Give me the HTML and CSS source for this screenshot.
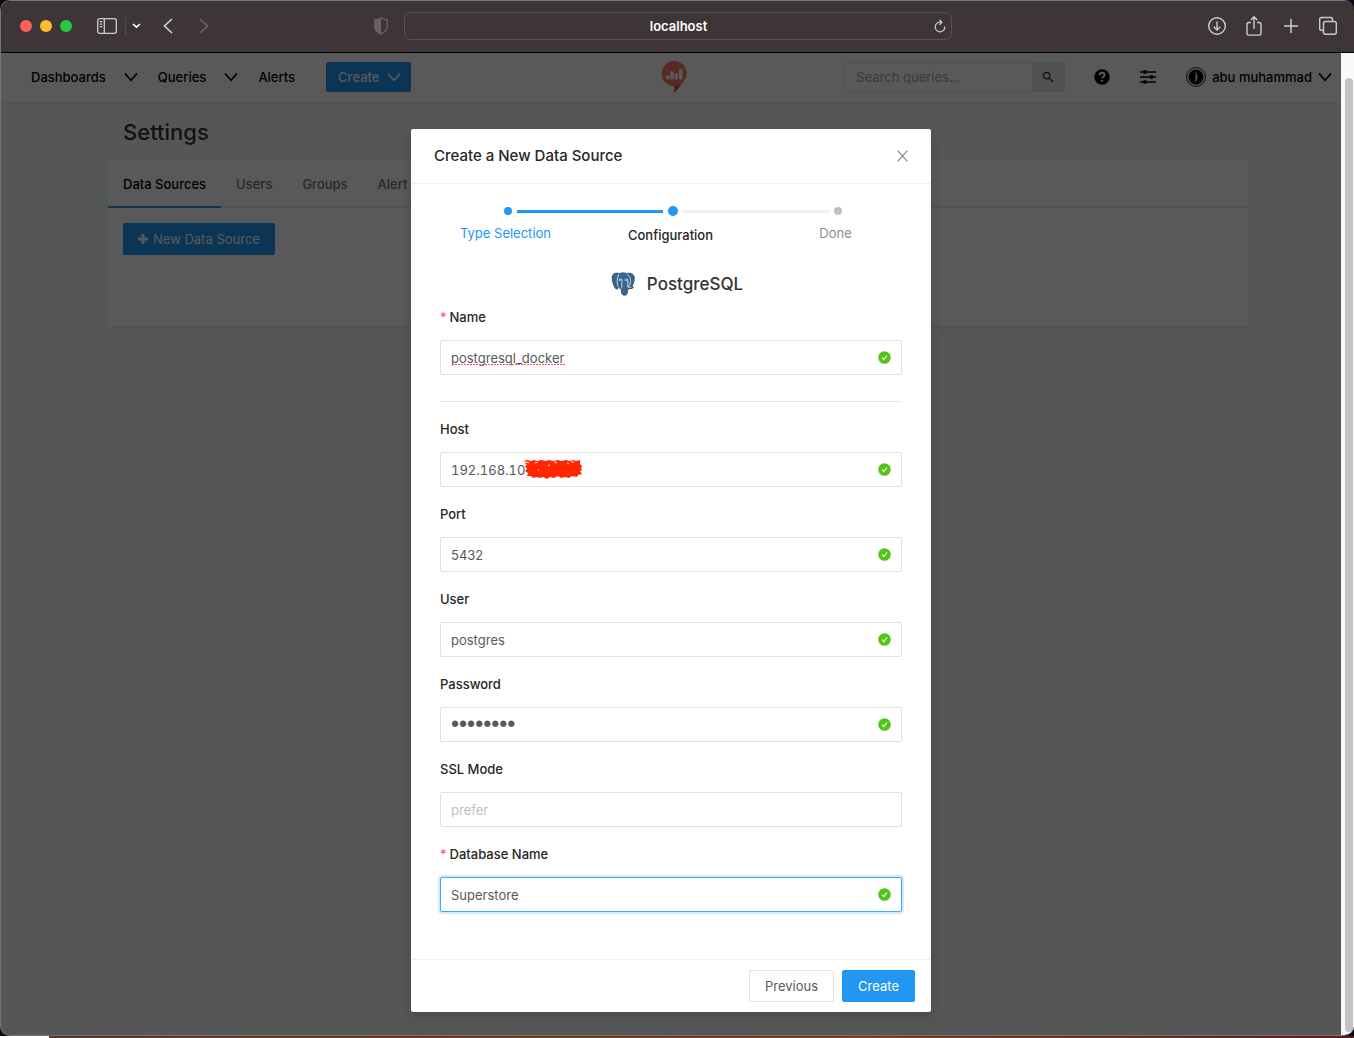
FILE: index.html
```html
<!DOCTYPE html>
<html lang="en">
<head>
<meta charset="utf-8">
<meta name="viewport" content="width=device-width, initial-scale=1">
<title>localhost</title>
<link rel="stylesheet" href="styles.css">
</head>
<body>
<svg class="defs" width="0" height="0" aria-hidden="true">
  <symbol id="chevron" viewBox="0 0 14 14"><path d="M1 3.500L7 10.200L13 3.500" fill="none" stroke="currentColor" stroke-width="1.700"/></symbol>
  <symbol id="valid" viewBox="0 0 14 14"><circle cx="7.500" cy="7.500" r="6.300" fill="#52c41a"/><path d="M5.100 7.600L6.900 9.500L9.900 5.500" fill="none" stroke="#fff" stroke-width="1.200"/></symbol>
</svg>
<div class="window">
  <header class="toolbar">
    <div class="toolbar-side">
      <div class="lights"><span class="light red"></span><span class="light yellow"></span><span class="light green"></span></div>
      <button class="tool sidebar-tool" aria-label="Show sidebar"><svg width="20" height="16" viewBox="0 0 20 16" fill="none" stroke="currentColor" stroke-width="1.300"><rect x=".7" y=".7" width="18.600" height="14.600" rx="2"/><path d="M7.300 1v14M2.700 3.700h2.600M2.700 6.200h2.600M2.700 8.700h2.600"/></svg></button>
      <span class="tool-divider"></span>
      <button class="tool" aria-label="Tab groups"><svg width="9" height="6" viewBox="0 0 9 6" fill="none" stroke="#fff" stroke-width="1.600"><path d="M1 1l3.500 3.200L8 1"/></svg></button>
      <button class="tool back-tool" aria-label="Back"><svg width="10" height="16" viewBox="0 0 10 16" fill="none" stroke="currentColor" stroke-width="1.700"><path d="M9 1L1.500 8L9 15"/></svg></button>
      <button class="tool forward-tool" aria-label="Forward"><svg width="10" height="16" viewBox="0 0 10 16" fill="none" stroke="currentColor" stroke-width="1.700"><path d="M1 1l7.500 7L1 15"/></svg></button>
      <button class="tool shield-tool" aria-label="Privacy report"><svg width="14" height="18" viewBox="0 0 14 18"><path d="M7 .7c2 1.500 4 2 6.200 2.200V9c0 4-2.700 6.400-6.200 8.200C3.500 15.400.8 13 .8 9V2.900C3 2.700 5 2.200 7 .7z" fill="none" stroke="currentColor" stroke-width="1.300"/><path d="M7 .7C5 2.200 3 2.700.8 2.900V9c0 4 2.700 6.400 6.200 8.200z" fill="currentColor"/></svg></button>
    </div>
    <div class="address">
      <span class="address-text">localhost</span>
      <button class="tool" aria-label="Reload"><svg width="12" height="14" viewBox="0 0 12 14" fill="none" stroke="currentColor" stroke-width="1.200"><path d="M10.800 7.500A4.800 4.800 0 1 1 6 3.200h1.500M5.300 .8l2.600 2.400-2.400 2.600"/></svg></button>
    </div>
    <div class="toolbar-side toolbar-end">
      <button class="tool" aria-label="Downloads"><svg width="20" height="20" viewBox="0 0 20 20" fill="none" stroke="currentColor" stroke-width="1.400"><circle cx="10" cy="10" r="8.300"/><path d="M10 5.500v8.300M6.700 10.800l3.300 3.200 3.300-3.200"/></svg></button>
      <button class="tool" aria-label="Share"><svg width="16" height="22" viewBox="0 0 16 22" fill="none" stroke="currentColor" stroke-width="1.400"><path d="M5 7.500H2.800C1.700 7.500 1 8.200 1 9.300v9c0 1.100.7 1.800 1.800 1.800h10.400c1.100 0 1.800-.7 1.800-1.800v-9c0-1.100-.7-1.800-1.800-1.800H11M8 14V2M4.800 5L8 1.700 11.200 5"/></svg></button>
      <button class="tool" aria-label="New tab"><svg width="14" height="14" viewBox="0 0 14 14" stroke="currentColor" stroke-width="1.500"><path d="M7 0v14M0 7h14"/></svg></button>
      <button class="tool" aria-label="Tab overview"><svg width="20" height="20" viewBox="0 0 20 20" fill="none" stroke="currentColor" stroke-width="1.400"><rect x="5.500" y="5.500" width="12.800" height="12.800" rx="2"/><path d="M5.300 14.300H3.500c-1 0-1.800-.7-1.800-1.800V3.300c0-1 .8-1.800 1.800-1.800h9.200c1.100 0 1.800.8 1.800 1.800v2"/></svg></button>
    </div>
  </header>

  <div class="viewport">
    <div class="page">
      <nav class="navbar">
        <div class="nav-start">
          <a class="nav-link" href="#">Dashboards</a><svg class="chevron" width="14" height="14"><use href="#chevron"/></svg>
          <a class="nav-link" href="#">Queries</a><svg class="chevron" width="14" height="14"><use href="#chevron"/></svg>
          <a class="nav-link" href="#">Alerts</a>
          <button class="btn primary nav-create">Create <svg width="14" height="14"><use href="#chevron"/></svg></button>
        </div>
        <a class="logo" href="#" aria-label="Redash"><svg width="26" height="34" viewBox="0 0 26 34"><path d="M13 1a12.500 12.500 0 0 1 12.700 12.600c0 4-2 7-4.200 9.200L13.400 33v-7A12.500 12.500 0 1 1 13 1z" fill="#ff7964"/><path d="M13.400 26c4 0 6.500-1.500 8.100-3.200L13.400 33z" fill="#d8503c"/><path d="M5 15.500h3.600v3.700H5zM9.300 11.500h3.400v7.700H9.300zM13.700 13.600h3.400v5.600h-3.400zM18 9h3.400v10.200H18z" fill="#fff"/></svg></a>
        <div class="nav-end">
          <form class="search">
            <input type="text" placeholder="Search queries..." aria-label="Search queries">
            <button type="button" aria-label="Search"><svg width="12" height="12" viewBox="0 0 12 12" fill="none" stroke="currentColor" stroke-width="1.300"><circle cx="4.600" cy="4.600" r="3.300"/><path d="M7 7l4 4"/></svg></button>
          </form>
          <a class="nav-icon" href="#" aria-label="Help"><svg width="16" height="16" viewBox="0 0 16 16"><circle cx="8" cy="8" r="7.700" fill="#000"/><path d="M5.500 6.200C5.700 4.500 6.800 3.800 8.100 3.800c1.400 0 2.500.8 2.500 2.200 0 1.800-2.200 1.800-2.300 3.400M8.200 10.700v2" fill="none" stroke="#fff" stroke-width="1.900"/></svg></a>
          <a class="nav-icon" href="#" aria-label="Settings"><svg width="16" height="16" viewBox="0 0 16 16"><path d="M0 3h16M0 8h16M0 13h16" stroke="#000" stroke-width="1.300"/><path d="M3.500 1.200h3v3.600h-3zM10 6.200h3v3.600h-3zM3.500 11.200h3v3.600h-3z" fill="#000"/></svg></a>
          <a class="account" href="#"><svg width="20" height="20" viewBox="0 0 20 20"><circle cx="10" cy="10" r="9.400" fill="#fff" stroke="#000" stroke-width=".9"/><circle cx="10" cy="10" r="7.500"/><path d="M9.300 4.200c3 3.500 2.800 8.500-.6 11.600 1.200-4 1.300-8 .6-11.600z" fill="#fff"/></svg>abu muhammad<svg class="account-chevron" width="14" height="14"><use href="#chevron"/></svg></a>
        </div>
      </nav>
      <main class="settings">
        <h1>Settings</h1>
        <section class="card">
          <div class="tabs"><a class="tab active" href="#">Data Sources</a><a class="tab" href="#">Users</a><a class="tab" href="#">Groups</a><a class="tab" href="#">Alert</a></div>
          <div class="card-body"><button class="btn primary new-source"><svg width="10" height="10" viewBox="0 0 10 10"><path d="M5 0v10M0 5h10" stroke="#fff" stroke-width="3"/></svg>New Data Source</button></div>
        </section>
      </main>
    </div>

    <div class="overlay">
      <div class="modal" role="dialog" aria-labelledby="modal-title">
        <div class="modal-header">
          <h2 id="modal-title">Create a New Data Source</h2>
          <button class="close" aria-label="Close"><svg width="11" height="12" viewBox="0 0 11 12" stroke="currentColor" stroke-width="1.300"><path d="M.6 .6l9.800 10.800M10.400 .6L.6 11.400"/></svg></button>
        </div>
        <div class="modal-body">
          <ol class="steps">
            <li class="step finished"><div class="track"><span class="rail empty"></span><span class="dot"></span><span class="rail done"></span></div><span class="step-name">Type Selection</span></li>
            <li class="step current"><div class="track"><span class="rail done"></span><span class="dot"></span><span class="rail"></span></div><span class="step-name">Configuration</span></li>
            <li class="step"><div class="track"><span class="rail"></span><span class="dot"></span><span class="rail empty"></span></div><span class="step-name">Done</span></li>
          </ol>
          <div class="source">
            <svg width="24" height="24" viewBox="0 0 24 24" stroke-linecap="round" stroke-linejoin="round"><path d="M8 1.600C4 .2 1 2 1.200 6c.1 3 1.600 8.500 3.400 10.500 1.200 1.300 2.200.2 3.200-.9.900.8 1.700.9 2.500.8-.1 2.300.1 4.500 1 5.800 1 1.400 3.600 1.400 4.600-.3.700-1.200.8-3.600.9-5.200 2.200.3 4.400-.1 5.500-1.200.4-.5-.2-.8-1.700-.7 1.600-2.600 3-6.500 2.600-9.600C22.700 1.500 19 .7 15.800 1.600 13.200.6 10.600.8 8 1.600z" fill="#336791" stroke="#444b52" stroke-width="1"/><path d="M8 2.200C6 4.400 6.300 9 6.300 11.500c0 1.600.5 3 1.600 3.700M8.300 7.500c1.500-.8 2.700-.5 2.900.7.100 1.500-.7 2.800-.5 4.300.1 1 .5 1.900-.2 3.500M15.800 2c3.300 2.400 3.900 5 3.700 7.300-.1 2.200-.9 3.900-2.500 5.700-.5-1.200-.4-2-.2-3 .2-1.500.3-2.600-.1-4.200M13.800 7.800c.9-.8 2.200-.9 3-.3M8.500 8.300h.8M15 8.500h.5M17 15c.8.500 1.800.5 3 .2" fill="none" stroke="#dfe8ef" stroke-width=".9"/></svg>
            <h3>PostgreSQL</h3>
          </div>
          <form class="fields" id="source-form">
            <div class="field"><label class="required" for="name">Name</label><div class="control"><input id="name" type="text" value="postgresql_docker" spellcheck="false"><span class="misspelled"></span><svg class="valid" width="14" height="14"><use href="#valid"/></svg></div></div>
            <hr>
            <div class="field"><label for="host">Host</label><div class="control"><input class="address-field" id="host" type="text" value="192.168.10"><svg class="scribble" width="60" height="20" viewBox="0 0 60 20"><path d="M1 2l4-1 4 1 3-1 3 1 4-1 5 1 2-1 6 1 4-1 3 1 5-1 4 1 3-1 3 1 4-1v4l2 2-1 3 2 1-3 1 2 3-4 1-1 2-5-1-3 2-4-1-4 1-3-2-4 2-4-1-3 2-4-2-3 1-3-1-4 1-2-2-4 0 1-3-3-2 2-2-2-3 2-1-2-2 3-1z" fill="#ff2600"/><path d="M13 4l3-1M32 3l3 1M26 7l2-1M45 4l2 1M16 11h1M49 3h3M5 3l2 1" stroke="#fff" stroke-width=".9"/></svg><svg class="valid" width="14" height="14"><use href="#valid"/></svg></div></div>
            <div class="field"><label for="port">Port</label><div class="control"><input id="port" type="text" value="5432"><svg class="valid" width="14" height="14"><use href="#valid"/></svg></div></div>
            <div class="field"><label for="user">User</label><div class="control"><input id="user" type="text" value="postgres"><svg class="valid" width="14" height="14"><use href="#valid"/></svg></div></div>
            <div class="field"><label for="password">Password</label><div class="control"><input id="password" type="password" value="postgres"><svg class="valid" width="14" height="14"><use href="#valid"/></svg></div></div>
            <div class="field"><label for="ssl">SSL Mode</label><div class="control"><input id="ssl" type="text" placeholder="prefer"></div></div>
            <div class="field"><label class="required" for="database">Database Name</label><div class="control"><input class="focused" id="database" type="text" value="Superstore"><svg class="valid" width="14" height="14"><use href="#valid"/></svg></div></div>
          </form>
        </div>
        <div class="modal-footer"><button class="btn" type="button">Previous</button><button class="btn primary" type="submit" form="source-form">Create</button></div>
      </div>
    </div>

    <div class="scrollbar"><span class="thumb"></span></div>
  </div>
</div>
<div class="desktop-edge"></div>
</body>
</html>
```
FILE: styles.css
```css
* { box-sizing: border-box; }

body {
  margin: 0;
  min-height: 100vh;
  display: flex;
  flex-direction: column;
  background: #0b0914;
  font: 13px/20px Inter, "Liberation Sans", sans-serif;
  color: #595959;
}

a { color: inherit; text-decoration: none; }
button, input { font: inherit; color: inherit; margin: 0; }
h1, h2, h3 { margin: 0; font-weight: 500; }
svg { display: block; flex: none; }
.defs { position: absolute; }

.window {
  flex: 1;
  display: flex;
  flex-direction: column;
  border: 1px solid #757373;
  border-right: 0;
  border-radius: 10px;
  overflow: hidden;
}

/* Browser toolbar */
.toolbar {
  height: 52px;
  display: grid;
  grid-template-columns: 1fr minmax(200px, 548px) 1fr;
  align-items: center;
  padding-bottom: 2px;
  background: #3e3536;
  border-bottom: 1px solid #000;
  color: #d0cbcb;
}
.toolbar-side { display: flex; align-items: center; padding-left: 19px; }
.toolbar-end { justify-content: flex-end; gap: 17px; padding: 0 16px 0 0; }
.toolbar-end .tool { width: 20px; display: flex; justify-content: center; }
.lights { display: flex; gap: 8px; margin-right: 25px; }
.light { width: 12px; height: 12px; border-radius: 50%; }
.red { background: #ff5f57; }
.yellow { background: #febc2e; }
.green { background: #28c840; }
.tool { padding: 0; border: 0; background: none; }
.tool-divider { width: 1px; height: 18px; margin: 0 6px 0 8px; background: #554c4d; }
.back-tool { margin-left: 22px; }
.forward-tool { margin-left: 26px; color: #6a6162; }
.shield-tool { margin: 0 16px 0 auto; color: #6a6162; }
.address {
  height: 28px;
  display: flex;
  align-items: center;
  padding: 0 5px 0 19px;
  border: 1px solid #5a5152;
  border-radius: 7px;
}
.address-text { flex: 1; text-align: center; font-weight: 600; color: #fff; }

/* Web page */
.viewport { flex: 1; display: grid; grid-template-columns: 1fr 13px; }
.page, .overlay { grid-row: 1; grid-column: 1; min-width: 0; }
.page { background: #f4f7f6; }

.navbar {
  height: 49px;
  display: grid;
  grid-template-columns: 1fr auto 1fr;
  align-items: center;
  padding: 0 9px 2px 15px;
  background: #fff;
  box-shadow: 0 4px 9px -3px rgba(102, 136, 153, 0.15);
  font-weight: 500;
  color: #000;
}
.nav-start, .nav-end { display: flex; align-items: center; }
.nav-end { justify-content: flex-end; }
.nav-link { padding-left: 15px; }
.chevron { margin: 0 5px 0 18px; }
.nav-create { margin-left: 31px; }
.nav-create.btn { height: 30px; gap: 8px; padding: 0 9px 0 11px; }
.search { display: flex; width: 222px; height: 30px; margin-right: 29px; font-weight: 400; }
.search input {
  flex: 1;
  min-width: 0;
  padding: 0 12px;
  border: 1px solid #e8e8e8;
  border-radius: 2px 0 0 2px;
  background: #fff;
}
.search input::placeholder { color: #a6a6a6; opacity: 1; }
.search button { width: 32px; padding: 0 0 0 9px; border: 0; background: #e4e8e8; color: #333; }
.nav-icon { margin-right: 30px; }
.account { display: flex; align-items: center; gap: 6px; }

.settings { width: 100%; max-width: 1154px; margin: 0 auto; padding: 15px 0 0 14px; }
.settings h1 { padding-left: 15px; font-size: 22px; line-height: 30px; color: #333; }
.card {
  min-height: 166px;
  margin-top: 13px;
  background: #fff;
  border-radius: 3px;
  box-shadow: 0 4px 9px -3px rgba(102, 136, 153, 0.15);
}
.tabs { height: 48px; display: flex; border-bottom: 2px solid #eaeaea; font-weight: 500; }
.tab { height: 48px; padding: 0 15px; line-height: 48px; color: #767676; }
.tab.active { border-bottom: 2px solid #2196f3; color: #000; }
.card-body { padding: 15px; }

.btn {
  height: 32px;
  display: inline-flex;
  align-items: center;
  justify-content: center;
  gap: 6px;
  padding: 0 15px;
  border: 1px solid #e3e3e3;
  border-radius: 2px;
  background: #fff;
}
.btn.primary { border-color: #2196f3; background: #2196f3; color: #fff; }
.new-source.btn { gap: 5px; padding: 0 14px; }

/* Dialog */
.overlay { padding: 76px 16px 23px; background: rgba(0, 0, 0, 0.65); }
.modal {
  max-width: 520px;
  margin: 0 auto;
  background: #fff;
  border-radius: 2px;
  box-shadow: 0 4px 12px rgba(0, 0, 0, 0.15);
}
.modal-header {
  height: 55px;
  display: flex;
  align-items: center;
  justify-content: space-between;
  padding: 0 23px;
  border-bottom: 1px solid #efefef;
}
.modal-header h2 { font-size: 15px; line-height: 22px; color: #262626; }
.close { padding: 0; border: 0; background: none; color: #8c8c8c; }
.modal-body { padding: 22px 29px 30px; }

.steps {
  display: grid;
  grid-template-columns: repeat(3, 165px);
  justify-content: center;
  margin: 0;
  padding: 0 0 0 4px;
  list-style: none;
}
.step { text-align: center; color: #8c8c8c; }
.track { height: 10px; display: flex; align-items: center; gap: 5px; }
.rail { flex: 1; height: 3px; background: #f0f0f0; }
.rail.done { background: #2196f3; }
.rail.empty { background: none; }
.dot { width: 8px; height: 8px; border-radius: 50%; background: #bfbfbf; }
.step-name { display: block; padding: 7px 5px 0 0; }
.finished { color: #2196f3; }
.finished .dot, .current .dot { background: #2196f3; }
.current { color: #262626; font-weight: 500; }
.current .dot { width: 10px; height: 10px; }
.current .step-name { padding-top: 9px; }

.source { display: flex; align-items: center; justify-content: center; gap: 12px; padding: 27px 0 11px 12px; }
.source h3 { font-size: 17px; line-height: 24px; color: #333; }

.field { padding-bottom: 17px; }
.field label { display: block; margin-bottom: 13px; font-weight: 500; color: #262626; }
.required::before { content: "*"; margin-right: 3px; font-weight: 400; color: #ff4d6a; }
.control { position: relative; }
.control input {
  display: block;
  width: 100%;
  height: 35px;
  padding: 0 36px 0 10px;
  border: 1px solid #e0e0e0;
  border-radius: 2px;
  background: #fff;
  outline: 0;
}
.control input::placeholder { color: #bfbfbf; opacity: 1; }
.control .focused { border-color: #40a9ff; box-shadow: 0 0 0 2px rgba(33, 150, 243, 0.2); }
.control .address-field { font-variant-numeric: tabular-nums; }
.control input[type="password"] { font-family: "Liberation Sans", sans-serif; font-size: 23px; }
.misspelled {
  position: absolute;
  top: 24px;
  left: 12px;
  width: 113px;
  height: 1px;
  background: repeating-linear-gradient(90deg, #ff4d6a 0 2px, transparent 2px 3px);
}
.valid { position: absolute; top: 10px; right: 11px; }
.scribble { position: absolute; top: 7px; left: 82px; }
hr { height: 1px; margin: 9px 0 17px; border: 0; background: #e8e8e8; }

.modal-footer {
  display: flex;
  justify-content: flex-end;
  gap: 8px;
  padding: 10px 16px;
  border-top: 1px solid #efefef;
}

.scrollbar { display: flex; padding: 25px 1px 3px 4px; background: #fafafa; }
.thumb { flex: 1; border-radius: 4px; background: #c2c2c2; }

.desktop-edge {
  height: 2px;
  background: linear-gradient(90deg, #fff 49px, transparent 49px), linear-gradient(90deg, #54382c, #8f3519 65%, #571d23);
}
```
